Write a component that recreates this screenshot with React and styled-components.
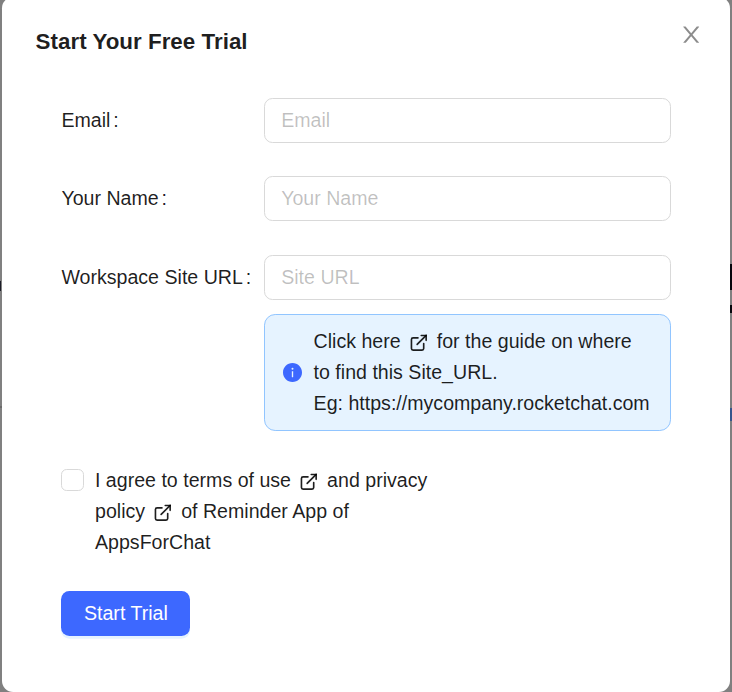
import React from "react";
import styled, { createGlobalStyle } from "styled-components";

const GlobalStyle = createGlobalStyle`
  * { box-sizing: border-box; }
  html, body { margin: 0; padding: 0; }
  body {
    overflow: hidden;
    background: #808080;
    color: rgba(0, 0, 0, 0.88);
    font-family: "Liberation Sans", Arial, sans-serif;
    font-size: 19.6px;
    line-height: 30.8px;
  }
`;

const Backdrop = styled.div`
  position: relative;
  height: 692px;
  padding: 0 2px;
  overflow: hidden;
  background: #808080;
`;

const PageSliver = styled.span`
  position: absolute;
  ${(p) => p.$side}: 0;
  top: ${(p) => p.$top}px;
  width: ${(p) => p.$width || 2}px;
  height: ${(p) => p.$height}px;
  background: ${(p) => p.$color};
`;

const Modal = styled.section`
  position: relative;
  height: 695px;
  margin-top: -3px;
  padding: 28px 33.6px 0;
  border-radius: 11.2px;
  background: #fff;
`;

const Header = styled.header`
  display: flex;
  justify-content: space-between;
  height: 73px;
`;

const Title = styled.h1`
  margin: 0;
  font-size: 22.4px;
  line-height: 33.6px;
  font-weight: 700;
`;

const CloseButton = styled.button`
  display: flex;
  width: 22.4px;
  height: 22.4px;
  margin: -1.6px -5.8px 0 0;
  padding: 0;
  border: 0;
  background: none;
  color: rgba(0, 0, 0, 0.45);
`;

const Form = styled.form`
  padding: 0 25.4px;
`;

const Field = styled.div`
  display: grid;
  grid-template-columns: 203px 407px;
  margin-bottom: ${(p) => p.$gap}px;
`;

const Label = styled.label`
  line-height: 44.8px;
  padding-left: 0.4px;
  white-space: nowrap;

  &::after {
    content: ":";
    margin-left: 2.8px;
  }
`;

const Input = styled.input`
  width: 100%;
  height: 45px;
  padding: 0 16.2px;
  border: 1px solid #d9d9d9;
  border-radius: 8.4px;
  outline: 0;
  background: #fff;
  color: inherit;
  font: inherit;

  &::placeholder {
    color: rgba(0, 0, 0, 0.25);
    opacity: 1;
  }
`;

const Notice = styled.div`
  display: flex;
  align-items: center;
  width: 407px;
  height: 117px;
  margin-left: 203px;
  padding: 0 0 0 18.2px;
  border: 1px solid #91c5ff;
  border-radius: 11.2px;
  background: #e6f3ff;
`;

const NoticeText = styled.div`
  margin-left: 11.4px;
  white-space: nowrap;
`;

const Agreement = styled.label`
  display: flex;
  align-items: flex-start;
  margin-top: 34px;
`;

const Checkbox = styled.input`
  appearance: none;
  flex: none;
  width: 23px;
  height: 22px;
  margin: 4px 11px 0 0;
  border: 1px solid #d9d9d9;
  border-radius: 5.6px;
  background: #fff;
`;

const Submit = styled.button`
  display: block;
  width: 129px;
  height: 45px;
  margin-top: 33.6px;
  padding: 0 0 0 0.8px;
  border: 0;
  border-radius: 8.4px;
  background: #3d68ff;
  box-shadow: 0 2.8px 0 #e6f3ff;
  color: #fff;
  font: inherit;
`;

const Glyph = styled.svg`
  flex: none;
  width: ${(p) => p.$size}px;
  height: ${(p) => p.$size}px;
  fill: currentColor;
  color: ${(p) => p.$color || "inherit"};
`;

const LinkGlyph = styled.svg`
  width: 19.6px;
  height: 19.6px;
  margin: 0 2.8px;
  vertical-align: -4.4px;
  fill: none;
  stroke: currentColor;
  stroke-width: 2;
  stroke-linecap: round;
`;

function ExternalLink() {
  return (
    <LinkGlyph viewBox="0 0 24 24">
      <path d="M18 13v6a2 2 0 0 1-2 2H5a2 2 0 0 1-2-2V8a2 2 0 0 1 2-2h6" />
      <path d="M15 3h6v6" />
      <path d="M10 14L21 3" />
    </LinkGlyph>
  );
}

function CloseIcon() {
  return (
    <Glyph $size={22.4} viewBox="64 44 896 896">
      <path d="M563.8 512l262.5-312.9c4.4-5.2.7-13.1-6.1-13.1h-79.8c-4.7 0-9.2 2.1-12.3 5.7L511.6 449.8 295.1 191.7c-3-3.6-7.5-5.7-12.3-5.7H203c-6.8 0-10.5 7.9-6.1 13.1L459.4 512 196.9 824.9A7.95 7.95 0 00203 838h79.8c4.7 0 9.2-2.1 12.3-5.7l216.5-258.1 216.5 258.1c3 3.6 7.5 5.7 12.3 5.7h79.8c6.8 0 10.5-7.9 6.1-13.1L563.8 512z" />
    </Glyph>
  );
}

function InfoIcon() {
  return (
    <Glyph $size={19} $color="#3d68ff" viewBox="64 64 896 896">
      <path d="M512 64C264.6 64 64 264.6 64 512s200.6 448 448 448 448-200.6 448-448S759.4 64 512 64zm32 664c0 4.4-3.6 8-8 8h-48c-4.4 0-8-3.6-8-8V456c0-4.4 3.6-8 8-8h48c4.4 0 8 3.6 8 8v272zm-32-344a48.01 48.01 0 010-96 48.01 48.01 0 010 96z" />
    </Glyph>
  );
}

export default function App() {
  return (
    <>
      <GlobalStyle />
      <Backdrop>
        <PageSliver $side="left" $top={281} $height={10} $width={1} $color="#1c1d28" />
        <PageSliver $side="left" $top={406} $height={2} $color="#6b6b6b" />
        <PageSliver $side="right" $top={264} $height={26} $color="#06070d" />
        <PageSliver $side="right" $top={305} $height={8} $color="#06070d" />
        <PageSliver $side="right" $top={408} $height={13} $color="#36558c" />
        <Modal role="dialog">
          <Header>
            <Title>Start Your Free Trial</Title>
            <CloseButton type="button" aria-label="Close">
              <CloseIcon />
            </CloseButton>
          </Header>
          <Form>
            <Field $gap={33}>
              <Label htmlFor="email">Email</Label>
              <Input id="email" placeholder="Email" />
            </Field>
            <Field $gap={34}>
              <Label htmlFor="name">Your Name</Label>
              <Input id="name" placeholder="Your Name" />
            </Field>
            <Field $gap={14}>
              <Label htmlFor="url">Workspace Site URL</Label>
              <Input id="url" placeholder="Site URL" />
            </Field>
            <Notice>
              <InfoIcon />
              <NoticeText>
                Click here <ExternalLink /> for the guide on where
                <br />
                to find this Site_URL.
                <br />
                Eg: https://mycompany.rocketchat.com
              </NoticeText>
            </Notice>
            <Agreement>
              <Checkbox type="checkbox" />
              <span>
                I agree to terms of use <ExternalLink /> and privacy
                <br />
                policy <ExternalLink /> of Reminder App of
                <br />
                AppsForChat
              </span>
            </Agreement>
            <Submit type="button">Start Trial</Submit>
          </Form>
        </Modal>
      </Backdrop>
    </>
  );
}
